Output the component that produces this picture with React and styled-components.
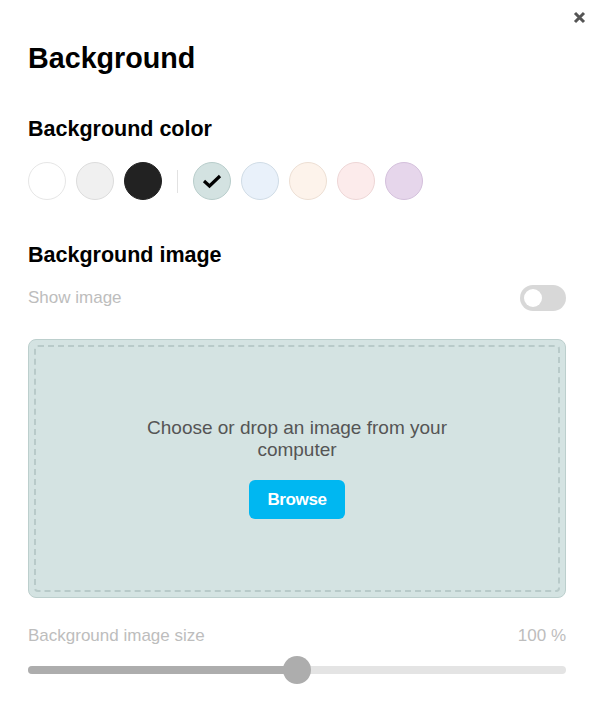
import React, { useState } from "react";
import styled, { createGlobalStyle } from "styled-components";

const GlobalStyle = createGlobalStyle`
  html, body {
    margin: 0;
    padding: 0;
    background: #ffffff;
    font-family: "Liberation Sans", Arial, sans-serif;
  }
`;

const Panel = styled.div`
  position: relative;
  width: 592px;
  height: 715px;
  box-sizing: border-box;
  padding: 41px 26px 0 28px;
  background: #fff;
`;

const CloseButton = styled.button`
  position: absolute;
  top: 9px;
  right: 5px;
  width: 16px;
  height: 16px;
  padding: 0;
  border: none;
  background: none;
  display: flex;
  align-items: center;
  justify-content: center;
  cursor: pointer;
`;

const Title = styled.h1`
  margin: 0;
  font-size: 28.7px;
  line-height: 34px;
  font-weight: 700;
  color: #000;
`;

const SectionTitle = styled.h2`
  margin: ${(p) => p.$top || 0}px 0 0;
  font-size: 21.5px;
  line-height: 24px;
  font-weight: 700;
  color: #000;
`;

const SwatchRow = styled.div`
  display: flex;
  align-items: center;
  gap: 10px;
  margin-top: 21px;
`;

const Swatch = styled.button`
  width: 38px;
  height: 38px;
  padding: 0;
  border-radius: 50%;
  box-sizing: border-box;
  border: 1px solid ${(p) => p.$border};
  background: ${(p) => p.$color};
  display: flex;
  align-items: center;
  justify-content: center;
  cursor: pointer;
`;

const Divider = styled.div`
  width: 1px;
  height: 23px;
  background: #e2e2e2;
  margin: 0 5px;
`;

const ToggleRow = styled.div`
  display: flex;
  align-items: center;
  justify-content: space-between;
  margin-top: 18px;
`;

const MutedLabel = styled.span`
  font-size: 17px;
  line-height: 20px;
  color: #bdbdbd;
`;

const Toggle = styled.button`
  position: relative;
  width: 46px;
  height: 26px;
  padding: 0;
  border: none;
  border-radius: 13px;
  background: ${(p) => (p.$on ? "#00b8f0" : "#d8d8d8")};
  cursor: pointer;

  &::after {
    content: "";
    position: absolute;
    top: 4px;
    left: ${(p) => (p.$on ? "24px" : "4px")};
    width: 18px;
    height: 18px;
    border-radius: 50%;
    background: #fff;
  }
`;

const DropZone = styled.div`
  margin-top: 28px;
  height: 259px;
  box-sizing: border-box;
  padding: 5px;
  border: 1px solid #bccfcd;
  border-radius: 8px;
  background: #d4e3e2;
`;

const DropInner = styled.div`
  height: 100%;
  box-sizing: border-box;
  border: 2px dashed #b8cac9;
  border-radius: 4px;
  display: flex;
  flex-direction: column;
  align-items: center;
  justify-content: center;
  padding-bottom: 1px;
`;

const DropText = styled.p`
  margin: 0;
  max-width: 320px;
  text-align: center;
  font-size: 19px;
  line-height: 22px;
  color: #555;
`;

const BrowseButton = styled.button`
  margin-top: 19px;
  width: 96px;
  height: 39px;
  border: none;
  border-radius: 6px;
  background: #00b7f1;
  color: #fff;
  font-family: inherit;
  font-size: 17px;
  font-weight: 700;
  letter-spacing: -0.4px;
  cursor: pointer;
`;

const SizeRow = styled.div`
  display: flex;
  align-items: center;
  justify-content: space-between;
  margin-top: 28px;
`;

const Slider = styled.div`
  position: relative;
  margin-top: 20px;
  height: 8px;
  border-radius: 4px;
  background: #e4e4e4;
`;

const SliderFill = styled.div`
  height: 100%;
  border-radius: 4px;
  background: #adadad;
`;

const SliderThumb = styled.div`
  position: absolute;
  top: 50%;
  width: 28px;
  height: 28px;
  border-radius: 50%;
  background: #adadad;
  transform: translate(-50%, -50%);
`;

const swatches = [
  { color: "#ffffff", border: "#e6e6e6" },
  { color: "#f0f0f0", border: "#dcdcdc" },
  { color: "#222222", border: "#222222" },
  "divider",
  { color: "#d3e2e1", border: "#b8cdcb", selected: true },
  { color: "#e9f1fa", border: "#d0dce6" },
  { color: "#fdf3eb", border: "#eddfd4" },
  { color: "#fcebeb", border: "#eed6d6" },
  { color: "#e6d6eb", border: "#d4c0dc" },
];

export default function App() {
  const [showImage, setShowImage] = useState(false);
  const percent = 50;

  return (
    <Panel>
      <GlobalStyle />
      <CloseButton aria-label="Close">
        <svg width="13" height="13" viewBox="0 0 13 13">
          <path d="M2 2L11 11M11 2L2 11" stroke="#555" strokeWidth="3" />
        </svg>
      </CloseButton>

      <Title>Background</Title>

      <SectionTitle $top={42}>Background color</SectionTitle>
      <SwatchRow>
        {swatches.map((s, i) =>
          s === "divider" ? (
            <Divider key={i} />
          ) : (
            <Swatch key={i} $color={s.color} $border={s.border}>
              {s.selected && (
                <svg width="20" height="16" viewBox="0 0 20 16">
                  <path
                    d="M2 8L7.5 13L18 3"
                    fill="none"
                    stroke="#000"
                    strokeWidth="3.2"
                  />
                </svg>
              )}
            </Swatch>
          )
        )}
      </SwatchRow>

      <SectionTitle $top={43}>Background image</SectionTitle>
      <ToggleRow>
        <MutedLabel>Show image</MutedLabel>
        <Toggle $on={showImage} onClick={() => setShowImage(!showImage)} />
      </ToggleRow>

      <DropZone>
        <DropInner>
          <DropText>Choose or drop an image from your computer</DropText>
          <BrowseButton>Browse</BrowseButton>
        </DropInner>
      </DropZone>

      <SizeRow>
        <MutedLabel>Background image size</MutedLabel>
        <MutedLabel>100 %</MutedLabel>
      </SizeRow>
      <Slider>
        <SliderFill style={{ width: `${percent}%` }} />
        <SliderThumb style={{ left: `${percent}%` }} />
      </Slider>
    </Panel>
  );
}
